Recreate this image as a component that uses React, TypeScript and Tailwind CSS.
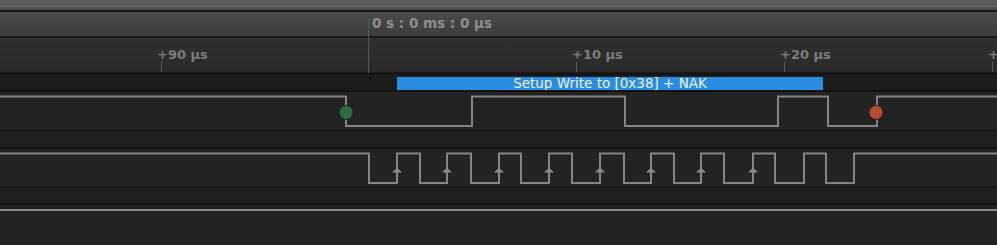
import React from "react";

// timeline geometry (px)
const ticks = [
  { x: -47, label: "+80 µs" },
  { x: 161, label: "+90 µs" },
  { x: 576, label: "+10 µs" },
  { x: 784, label: "+20 µs" },
  { x: 992, label: "+30 µs" },
];

const sdaEdges = [346, 472, 625, 778, 828, 877];
const sclEdges = [369, 397, 420, 447, 471, 499, 521, 549, 572, 600, 624, 651, 674, 701, 724, 753, 775, 804, 826, 854];
const sclArrows = [397, 447, 499, 549, 600, 651, 701, 753];

const HI = 4.5;
const LO = 34;

function wave(edges: number[], startHigh = true) {
  let high = startHigh;
  let pts = `0,${high ? HI : LO}`;
  for (const x of edges) {
    pts += ` ${x},${high ? HI : LO}`;
    high = !high;
    pts += ` ${x},${high ? HI : LO}`;
  }
  pts += ` 997,${high ? HI : LO}`;
  return pts;
}

const Channel: React.FC<{ children: React.ReactNode }> = ({ children }) => (
  <div className="h-[37px] shrink-0 bg-[#232323]">
    <svg width="997" height="37" className="block">
      {children}
    </svg>
  </div>
);

const Divider: React.FC<{ color?: string }> = ({ color = "bg-[#121212]" }) => (
  <div className={`h-[2px] shrink-0 ${color}`} />
);

export default function App() {
  return (
    <div className="flex h-[245px] w-[997px] flex-col overflow-hidden bg-[#222222] font-['DejaVu_Sans',sans-serif]">
      {/* top chrome */}
      <div className="h-[6px] shrink-0 bg-[#5a5a5a]" />
      <div className="h-px shrink-0 bg-[#6c6c6c]" />
      <div className="h-[3px] shrink-0 bg-[#4e4e4e]" />
      <Divider color="bg-[#161616]" />

      <div className="relative shrink-0">
        {/* header with cursor time */}
        <div className="flex h-[24px] items-center bg-gradient-to-b from-[#4b4b4b] to-[#3c3c3c] pl-[372px]">
          <span className="text-[13.5px] font-bold leading-none text-[#8e8e8e]">0 s : 0 ms : 0 µs</span>
        </div>
        <Divider color="bg-[#1a1a1a]" />

        {/* timescale */}
        <div className="relative h-[34px] bg-gradient-to-b from-[#2f2f2f] to-[#2a2a2a]">
          {ticks.map((t) => (
            <React.Fragment key={t.x}>
              <span
                className="absolute top-[10px] whitespace-nowrap text-[13px] font-bold leading-none text-[#7c7c7c]"
                style={{ left: t.x - 4 }}
              >
                {t.label}
              </span>
              <div className="absolute bottom-0 h-[10px] w-px bg-[#5c5c5c]" style={{ left: t.x }} />
            </React.Fragment>
          ))}
        </div>

        {/* zero cursor */}
        <div className="absolute left-[368px] top-[6px] h-[55px] w-px bg-[#575757]" />
      </div>
      <div className="h-px shrink-0 bg-[#1a1a1a]" />
      <div className="h-[2px] shrink-0 bg-[#141414]" />

      {/* I2C decoder row */}
      <div className="flex h-[15px] shrink-0 items-end bg-[#1c1c1c]">
        <div className="ml-[397px] flex h-[13px] w-[426px] items-center justify-center bg-[#2a8de2]">
          <span className="text-[13.5px] leading-none text-[#eef4fb]">Setup Write to [0x38] + NAK</span>
        </div>
      </div>
      <Divider color="bg-[#111111]" />

      {/* SDA */}
      <Channel>
        <polyline points={wave(sdaEdges)} fill="none" stroke="#858585" strokeWidth="2" />
        <circle cx="346" cy="20.5" r="7" fill="#2e6a3f" stroke="#1b2a1f" strokeWidth="1" />
        <circle cx="876" cy="20.5" r="7" fill="#b04c30" stroke="#3a1c14" strokeWidth="1" />
      </Channel>
      <Divider color="bg-[#181818]" />
      <div className="h-[16px] shrink-0 bg-[#1e1e1e]" />
      <Divider color="bg-[#111111]" />

      {/* SCL */}
      <Channel>
        <polyline points={wave(sclEdges)} fill="none" stroke="#858585" strokeWidth="2" />
        {sclArrows.map((x) => (
          <polygon key={x} points={`${x - 5},23.5 ${x + 5},23.5 ${x},18.5`} fill="#8a8a8a" />
        ))}
      </Channel>
      <Divider color="bg-[#181818]" />
      <div className="h-[15px] shrink-0 bg-[#1e1e1e]" />
      <Divider color="bg-[#111111]" />

      {/* third channel, idle high */}
      <div className="h-[40px] shrink-0 bg-[#232323]">
        <svg width="997" height="40" className="block">
          <line x1="0" y1="5" x2="997" y2="5" stroke="#8a8a8a" strokeWidth="2" />
        </svg>
      </div>
    </div>
  );
}
